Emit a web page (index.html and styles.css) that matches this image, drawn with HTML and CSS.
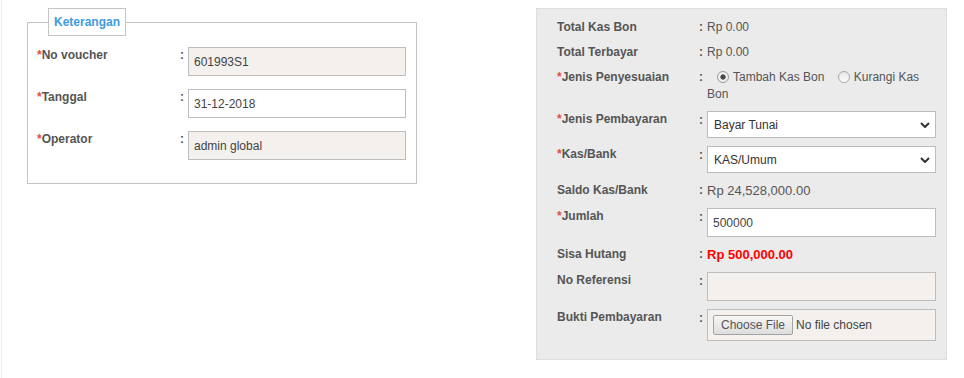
FILE: index.html
```html
<!DOCTYPE html>
<html lang="id">
<head>
<meta charset="utf-8">
<title>Kas Bon</title>
<link rel="stylesheet" href="styles.css">
</head>
<body>
<div class="page">
  <fieldset class="ket">
    <legend class="ket-legend">Keterangan</legend>
    <div class="frow">
      <label class="lbl"><span class="req">*</span>No voucher</label>
      <span class="colon">:</span>
      <input class="inp ro" type="text" value="601993S1" readonly>
    </div>
    <div class="frow">
      <label class="lbl"><span class="req">*</span>Tanggal</label>
      <span class="colon">:</span>
      <input class="inp" type="text" value="31-12-2018">
    </div>
    <div class="frow">
      <label class="lbl"><span class="req">*</span>Operator</label>
      <span class="colon">:</span>
      <input class="inp ro" type="text" value="admin global" readonly>
    </div>
  </fieldset>

  <div class="panel">
    <div class="prow">
      <span class="lbl">Total Kas Bon</span><span class="colon">:</span><span class="val">Rp 0.00</span>
    </div>
    <div class="prow">
      <span class="lbl">Total Terbayar</span><span class="colon">:</span><span class="val">Rp 0.00</span>
    </div>
    <div class="prow">
      <span class="lbl"><span class="req">*</span>Jenis Penyesuaian</span><span class="colon">:</span><span class="val"><span class="radio checked"></span>Tambah Kas Bon <span class="radio"></span>Kurangi Kas Bon</span>
    </div>
    <div class="prow">
      <span class="lbl lbl-in"><span class="req">*</span>Jenis Pembayaran</span><span class="colon lbl-in">:</span>
      <div class="selwrap">
        <select class="sel"><option>Bayar Tunai</option></select>
        <svg class="chev" width="10" height="6" viewBox="0 0 10 6"><path d="M1 1 L5 5 L9 1" fill="none" stroke="#333" stroke-width="2"/></svg>
      </div>
    </div>
    <div class="prow">
      <span class="lbl lbl-in"><span class="req">*</span>Kas/Bank</span><span class="colon lbl-in">:</span>
      <div class="selwrap">
        <select class="sel"><option>KAS/Umum</option></select>
        <svg class="chev" width="10" height="6" viewBox="0 0 10 6"><path d="M1 1 L5 5 L9 1" fill="none" stroke="#333" stroke-width="2"/></svg>
      </div>
    </div>
    <div class="prow prow-pad">
      <span class="lbl">Saldo Kas/Bank</span><span class="colon">:</span><span class="val val-big">Rp 24,528,000.00</span>
    </div>
    <div class="prow">
      <span class="lbl lbl-in"><span class="req">*</span>Jumlah</span><span class="colon lbl-in">:</span>
      <input class="inp" type="text" value="500000">
    </div>
    <div class="prow prow-pad">
      <span class="lbl">Sisa Hutang</span><span class="colon">:</span><span class="val val-red">Rp 500,000.00</span>
    </div>
    <div class="prow">
      <span class="lbl lbl-in">No Referensi</span><span class="colon lbl-in">:</span>
      <input class="inp ro" type="text" value="" readonly>
    </div>
    <div class="prow">
      <span class="lbl lbl-in">Bukti Pembayaran</span><span class="colon lbl-in">:</span>
      <label class="filebox"><span class="filebtn">Choose File</span><span class="filetxt">No file chosen</span></label>
    </div>
  </div>
</div>
</body>
</html>
```

FILE: styles.css
```css
html, body {
  margin: 0;
  padding: 0;
  background: #fff;
}

body {
  font-family: "Liberation Sans", Arial, sans-serif;
  font-size: 12px;
  color: #555;
}

.page {
  margin-left: 1px;
  border-left: 1px solid #ededed;
  min-height: 378px;
  box-sizing: border-box;
  padding-top: 8px;
  display: flex;
  align-items: flex-start;
}

/* Left fieldset */
.ket {
  box-sizing: border-box;
  width: 390px;
  margin: 0 0 0 25px;
  padding: 11px 10px 23px 9px;
  border: 1px solid #c4c4c4;
  min-inline-size: 0;
  display: flex;
  flex-direction: column;
  gap: 13px;
}

.ket-legend {
  margin-left: 11px;
  padding: 5px 5px;
  border: 1px solid #c4c4c4;
  font-weight: bold;
  font-size: 12px;
  line-height: 16px;
  color: #3d9be0;
  background: #fff;
}

.frow {
  display: grid;
  grid-template-columns: 143px 8px 1fr;
  align-items: start;
}

.lbl {
  font-weight: bold;
  color: #555;
  line-height: 17px;
  white-space: nowrap;
}

.frow .lbl,
.frow .colon,
.lbl-in {
  line-height: 15px;
  padding-top: 1px;
}

.req {
  color: #e0504d;
}

.colon {
  font-weight: bold;
  color: #555;
  line-height: 17px;
}

.inp {
  box-sizing: border-box;
  width: 100%;
  height: 29px;
  margin: 0;
  padding: 0 5px;
  border: 1px solid #bdbdbd;
  border-radius: 0;
  background: #fff;
  font-family: "Liberation Sans", Arial, sans-serif;
  font-size: 12px;
  color: #444;
  outline: none;
}

.inp.ro {
  background: #f3f0ed;
}

/* Right panel */
.panel {
  box-sizing: border-box;
  width: 411px;
  margin-left: 119px;
  padding: 10px 10px 18px 20px;
  background: #ebebeb;
  border: 1px solid #dedede;
  display: flex;
  flex-direction: column;
  gap: 8px;
}

.prow {
  display: grid;
  grid-template-columns: 142px 8px 1fr;
  align-items: start;
  line-height: 17px;
}

.prow-pad {
  padding: 1px 0;
}

.val {
  color: #555;
  line-height: 17px;
}

.val-big {
  font-size: 13px;
}

.val-red {
  font-size: 13px;
  font-weight: bold;
  color: #ff0000;
}

.radio {
  display: inline-block;
  box-sizing: border-box;
  width: 12px;
  height: 12px;
  margin: 0 4px 0 10px;
  vertical-align: -2px;
  border: 1px solid #a8a8a8;
  border-radius: 50%;
  background: linear-gradient(#e6e6e6, #fdfdfd);
}

.radio.checked {
  border-color: #9a9a9a;
  background: radial-gradient(circle, #4a4a4a 0, #4a4a4a 2.3px, #f2f2f2 3px, #e4e4e4 100%);
}

.selwrap {
  position: relative;
  height: 27px;
}

.sel {
  appearance: none;
  -webkit-appearance: none;
  box-sizing: border-box;
  width: 100%;
  height: 27px;
  margin: 0;
  padding: 0 24px 0 6px;
  border: 1px solid #bdbdbd;
  border-radius: 0;
  background: #fff;
  font-family: "Liberation Sans", Arial, sans-serif;
  font-size: 12px;
  color: #333;
  outline: none;
}

.chev {
  position: absolute;
  right: 6px;
  top: 11px;
  pointer-events: none;
}

.filebox {
  box-sizing: border-box;
  height: 32px;
  display: flex;
  align-items: center;
  padding: 0 5px;
  border: 1px solid #bdbdbd;
  background: #f3f0ed;
}

.filebtn {
  box-sizing: border-box;
  width: 80px;
  height: 20px;
  line-height: 18px;
  text-align: center;
  border: 1px solid #a3a3a3;
  border-radius: 2px;
  background: linear-gradient(#f7f7f7, #dddddd);
  color: #555;
  font-size: 12px;
}

.filetxt {
  margin-left: 3px;
  color: #444;
  font-size: 12px;
}
```
